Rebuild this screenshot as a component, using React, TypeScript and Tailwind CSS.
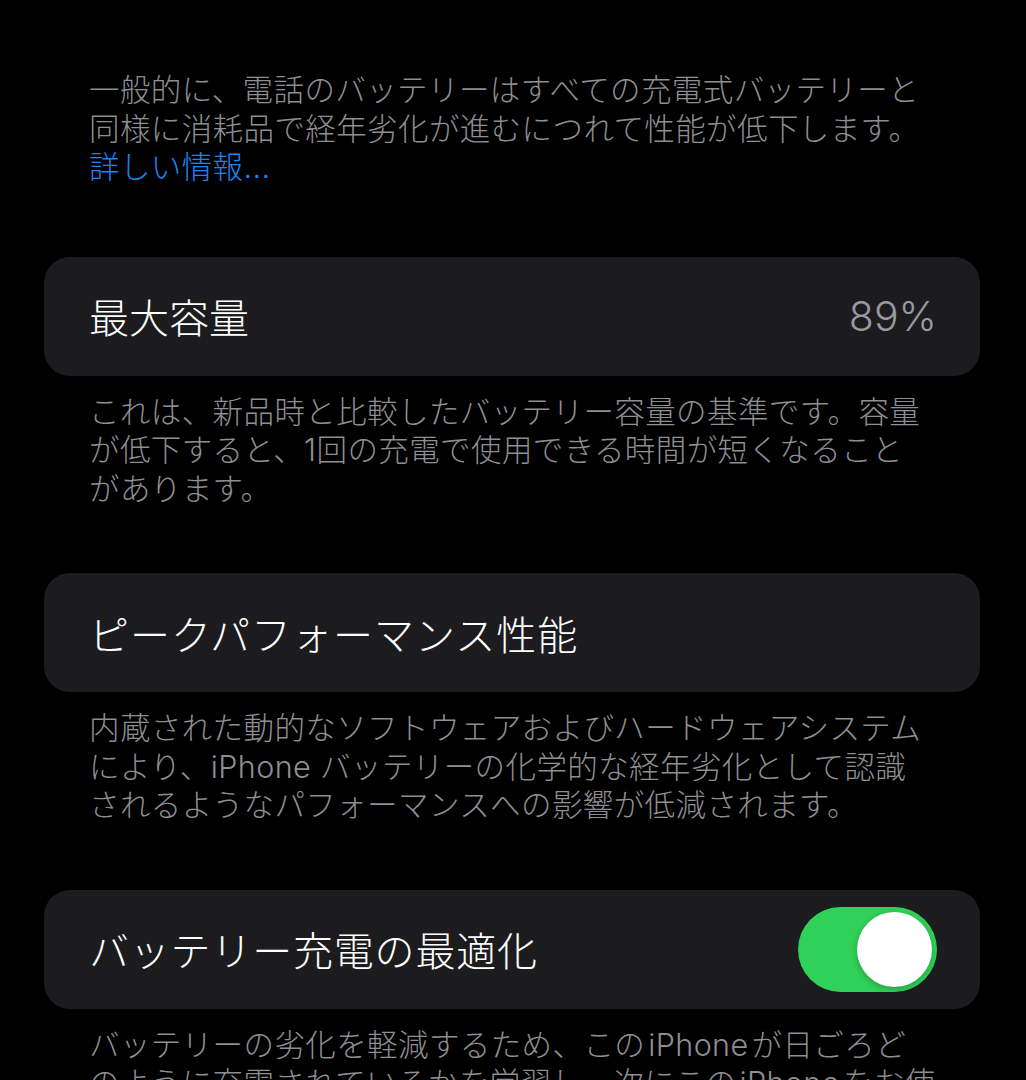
import React from "react";

const jp = { fontFamily: '"Noto Sans CJK JP", "Noto Sans", sans-serif' };
const mixed = { fontFamily: 'Inter, "Noto Sans CJK JP", sans-serif' };

function Foot({ lines }: { lines: React.ReactNode[] }) {
  return (
    <div className="px-[45px] text-[30.5px] leading-[38.5px] tracking-[0.4px] font-light text-[#8e8e93] whitespace-nowrap" style={mixed}>
      {lines.map((l, i) => (
        <div key={i}>{l}</div>
      ))}
    </div>
  );
}

function Card({ children }: { children: React.ReactNode }) {
  return (
    <div className="h-[119px] rounded-[26px] bg-[#1c1c1e] px-[45px] pr-[43px] flex items-center justify-between">
      {children}
    </div>
  );
}

export default function App() {
  return (
    <div className="w-[1026px] h-[1080px] overflow-hidden bg-black" style={jp}>
      <div className="pl-[44px] pr-[46px] pt-[71px]">
        <Foot
          lines={[
            "一般的に、電話のバッテリーはすべての充電式バッテリーと",
            "同様に消耗品で経年劣化が進むにつれて性能が低下します。",
            <span className="text-[#1d84f5]">詳しい情報...</span>,
          ]}
        />
        <div className="h-[70px]" />
        <Card>
          <span className="text-[40px] text-white leading-none font-light" style={jp}>最大容量</span>
          <span className="text-[41px] text-[#98989f] leading-none font-light" style={{ fontFamily: "Inter, sans-serif" }}>89%</span>
        </Card>
        <div className="h-[17px]" />
        <Foot
          lines={[
            "これは、新品時と比較したバッテリー容量の基準です。容量",
            "が低下すると、1回の充電で使用できる時間が短くなること",
            "があります。",
          ]}
        />
        <div className="h-[65px]" />
        <Card>
          <span className="text-[40px] text-white leading-none font-light tracking-[1px]" style={jp}>ピークパフォーマンス性能</span>
        </Card>
        <div className="h-[17px]" />
        <Foot
          lines={[
            "内蔵された動的なソフトウェアおよびハードウェアシステム",
            "により、iPhone バッテリーの化学的な経年劣化として認識",
            "されるようなパフォーマンスへの影響が低減されます。",
          ]}
        />
        <div className="h-[65px]" />
        <Card>
          <span className="text-[40px] text-white leading-none font-light tracking-[0.8px]" style={jp}>バッテリー充電の最適化</span>
          <div className="w-[139px] h-[85px] rounded-full bg-[#30d158] flex items-center justify-end pr-[5px]">
            <div className="w-[75px] h-[75px] rounded-full bg-white shadow-[0_2px_6px_rgba(0,0,0,0.25)]" />
          </div>
        </Card>
        <div className="h-[17px]" />
        <Foot
          lines={[
            <>
              バッテリーの劣化を軽減するため、この<span className="mx-[3px]">iPhone</span>が日ごろど
            </>,
            <>
              のように充電されているかを学習し、次にこの<span className="mx-[3px]">iPhone</span>をお使
            </>,
          ]}
        />
      </div>
    </div>
  );
}
